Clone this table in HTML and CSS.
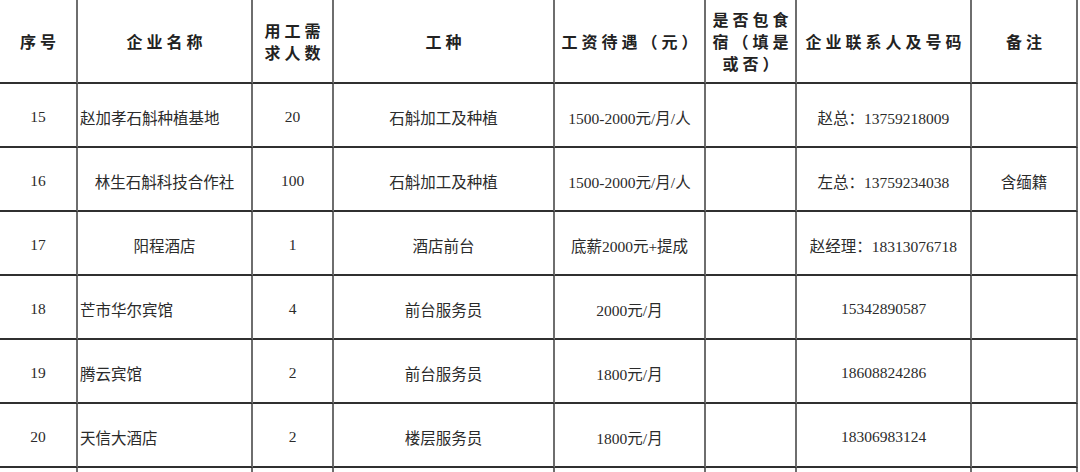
FILE: index.html
```html
<!DOCTYPE html>
<html lang="zh-CN">
<head>
<meta charset="utf-8">
<title>招聘信息表</title>
<link rel="stylesheet" href="styles.css">
</head>
<body>
<div class="sheet" role="table">
  <div class="row head" role="row">
    <div class="cell" role="columnheader">序号</div>
    <div class="cell" role="columnheader">企业名称</div>
    <div class="cell" role="columnheader">用工需<br>求人数</div>
    <div class="cell" role="columnheader">工种</div>
    <div class="cell" role="columnheader">工资待遇（元）</div>
    <div class="cell" role="columnheader">是否包食<br>宿（填是<br>或否）</div>
    <div class="cell" role="columnheader">企业联系人及号码</div>
    <div class="cell" role="columnheader">备注</div>
  </div>
  <div class="row" role="row">
    <div class="cell">15</div>
    <div class="cell left">赵加孝石斛种植基地</div>
    <div class="cell">20</div>
    <div class="cell">石斛加工及种植</div>
    <div class="cell">1500-2000元/月/人</div>
    <div class="cell"></div>
    <div class="cell">赵总：13759218009</div>
    <div class="cell"></div>
  </div>
  <div class="row" role="row">
    <div class="cell">16</div>
    <div class="cell">林生石斛科技合作社</div>
    <div class="cell">100</div>
    <div class="cell">石斛加工及种植</div>
    <div class="cell">1500-2000元/月/人</div>
    <div class="cell"></div>
    <div class="cell">左总：13759234038</div>
    <div class="cell">含缅籍</div>
  </div>
  <div class="row" role="row">
    <div class="cell">17</div>
    <div class="cell">阳程酒店</div>
    <div class="cell">1</div>
    <div class="cell">酒店前台</div>
    <div class="cell">底薪2000元+提成</div>
    <div class="cell"></div>
    <div class="cell">赵经理：18313076718</div>
    <div class="cell"></div>
  </div>
  <div class="row" role="row">
    <div class="cell">18</div>
    <div class="cell left">芒市华尔宾馆</div>
    <div class="cell">4</div>
    <div class="cell">前台服务员</div>
    <div class="cell">2000元/月</div>
    <div class="cell"></div>
    <div class="cell">15342890587</div>
    <div class="cell"></div>
  </div>
  <div class="row" role="row">
    <div class="cell">19</div>
    <div class="cell left">腾云宾馆</div>
    <div class="cell">2</div>
    <div class="cell">前台服务员</div>
    <div class="cell">1800元/月</div>
    <div class="cell"></div>
    <div class="cell">18608824286</div>
    <div class="cell"></div>
  </div>
  <div class="row" role="row">
    <div class="cell">20</div>
    <div class="cell left">天信大酒店</div>
    <div class="cell">2</div>
    <div class="cell">楼层服务员</div>
    <div class="cell">1800元/月</div>
    <div class="cell"></div>
    <div class="cell">18306983124</div>
    <div class="cell"></div>
  </div>
  <div class="row" role="row">
    <div class="cell"></div>
    <div class="cell"></div>
    <div class="cell"></div>
    <div class="cell"></div>
    <div class="cell"></div>
    <div class="cell"></div>
    <div class="cell"></div>
    <div class="cell"></div>
  </div>
</div>
</body>
</html>
```

FILE: styles.css
```css
html, body {
  margin: 0;
  padding: 0;
  background: #ffffff;
}

body {
  width: 1080px;
  height: 472px;
  overflow: hidden;
}

.sheet {
  display: grid;
  grid-template-columns: 78px 175px 81px 221px 151px 91px 175px 106px;
  grid-template-rows: 84px;
  grid-auto-rows: 64px;
  width: 1078px;
  font-family: "Liberation Serif", "Noto Sans CJK SC", serif;
  font-size: 15.5px;
  color: #2b2b2b;
}

.row {
  display: contents;
}

.cell {
  box-sizing: border-box;
  display: flex;
  align-items: center;
  justify-content: center;
  text-align: center;
  border-right: 2px solid #6e6e6e;
  border-bottom: 2px solid #303030;
  white-space: nowrap;
  padding-top: 3px;
}

.cell.left {
  justify-content: flex-start;
  padding-left: 2px;
  text-align: left;
}

.head .cell {
  font-family: "Noto Sans CJK SC", sans-serif;
  font-weight: 600;
  font-size: 16px;
  letter-spacing: 4px;
  line-height: 22px;
  color: #222222;
  padding-top: 0;
  padding-left: 4px;
}
```
